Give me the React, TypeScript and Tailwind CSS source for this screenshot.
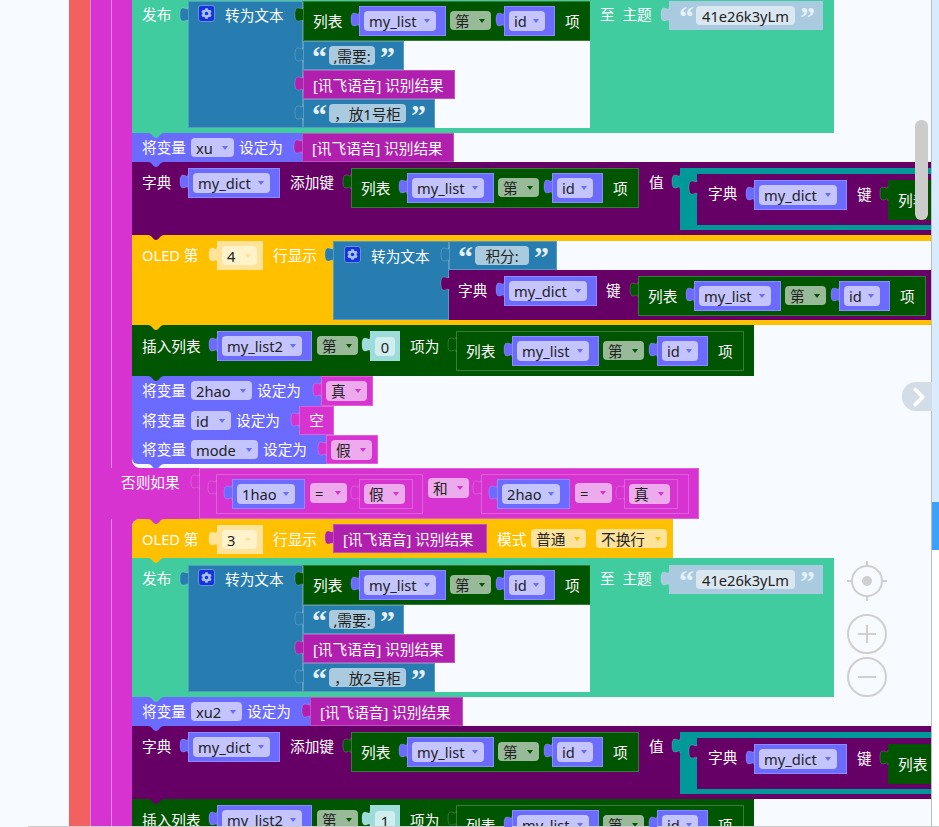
import type { ReactNode } from 'react';
import { ChevronRight } from 'lucide-react';
import { FaCog } from 'react-icons/fa';

const edge = 'shadow-[inset_0_0_0_1px_rgba(255,255,255,0.22)]';
const quote = "shrink-0 font-['Liberation_Serif',serif] text-[30px] leading-[26px] font-bold text-[#e6f0f7]";

function Tab({ fill, top = 'top-[6px]' }: { fill: string; top?: string }) {
  return (
    <svg viewBox="0 0 8 15" className={`absolute right-full h-[15px] w-[8px] z-10 overflow-visible stroke-white/30 stroke-[0.6] ${top} ${fill}`}>
      <path d="M8 0 C8 4 6 1 3 1 C0.5 1 0 4 0 7.5 C0 11 0.5 14 3 14 C6 14 8 11 8 15" />
    </svg>
  );
}

function Nub({ fill, left = 'left-[16px]' }: { fill: string; left?: string }) {
  return (
    <svg viewBox="0 0 16 5" className={`absolute top-full w-[16px] h-[5px] z-20 ${left} ${fill}`}>
      <path d="M0 0 C4 0 5 5 8 5 C11 5 12 0 16 0 z" />
    </svg>
  );
}

function T({ children, className = '' }: { children: ReactNode; className?: string }) {
  return <span className={`block shrink-0 whitespace-nowrap text-white leading-[20px] ${className}`}>{children}</span>;
}

function Pill({ text, className, caret }: { text: string; className: string; caret: string }) {
  return (
    <div className={`flex shrink-0 items-center justify-between rounded-[4px] pl-[5px] pr-[6px] text-[#222] whitespace-nowrap ${className}`}>
      <span className="leading-[20px]">{text}</span>
      <span className={`h-0 w-0 border-x-[3px] border-t-[4px] border-x-transparent ${caret}`} />
    </div>
  );
}

function Var({ name, className }: { name: string; className: string }) {
  return (
    <div className={`relative h-[30px] shrink-0 bg-[#6b6bff] pl-[5px] pt-[5px] ${edge} ${className}`}>
      <Tab fill="fill-[#6b6bff]" />
      <Pill text={name} className="h-[20px] w-[calc(100%-10px)] bg-[#c4c4ff]" caret="border-t-[#6b6bff]" />
    </div>
  );
}

function Di() {
  return <Pill text="第" className="ml-[4px] mt-[10px] h-[19px] w-[41px] bg-[#99ba99]" caret="border-t-[#005500]" />;
}

function ListItem({ className = '' }: { className?: string }) {
  return (
    <div className={`relative flex h-[40px] w-[288px] shrink-0 items-start bg-[#005500] ${edge} ${className}`}>
      <Tab fill="fill-[#005500]" />
      <T className="ml-[10px] mt-[10px] w-[30px]">列表</T>
      <Var name="my_list" className="ml-[16px] mt-[5px] w-[87px]" />
      <Di />
      <Var name="id" className="ml-[13px] mt-[5px] w-[51px]" />
      <T className="ml-[10px] mt-[10px] w-[15px]">项</T>
    </div>
  );
}

function Quote({ text, className, pill }: { text: string; className: string; pill: string }) {
  return (
    <div className={`relative flex h-[29px] shrink-0 items-start bg-[#277db0] ${edge} ${className}`}>
      <Tab fill="fill-[#277db0]" />
      <span className={`ml-[9px] mt-[3px] w-[17px] ${quote}`}>“</span>
      <span className={`mt-[5px] h-[19px] shrink-0 rounded-[4px] bg-[#a9cadf] text-center leading-[20px] whitespace-pre text-[#222] ${pill}`}>{text}</span>
      <span className={`ml-[5px] mt-[3px] w-[14px] ${quote}`}>”</span>
    </div>
  );
}

function Voice({ className = '' }: { className?: string }) {
  return (
    <div className={`relative h-[29px] shrink-0 bg-[#b01fae] pl-[10px] pt-[5px] ${edge} ${className}`}>
      <Tab fill="fill-[#b01fae]" />
      <T>[讯飞语音] 识别结果</T>
    </div>
  );
}

function Gear() {
  return (
    <div className="flex h-[17px] w-[17px] shrink-0 items-center justify-center rounded-[3px] border border-[#6f8fd8] bg-[#1234dd]">
      <FaCog size={11} className="text-[#a9bff0]" />
    </div>
  );
}

function Publish({ text, top }: { text: string; top: string }) {
  return (
    <div className="relative flex w-[702px]">
      <div className={`w-[56px] shrink-0 bg-[#40cc9e] ${top}`}>
        <T className="ml-[10px] mt-[3px] w-[30px]">发布</T>
      </div>
      <div className="w-[402px] shrink-0">
        <div className={`bg-[#40cc9e] ${top}`} />
        <div className="flex h-[127px]">
          <div className={`relative flex h-full w-[115px] shrink-0 items-start bg-[#277db0] ${edge}`}>
            <Tab fill="fill-[#277db0]" />
            <div className="ml-[10px] mt-[4px]"><Gear /></div>
            <T className="ml-[10px] mt-[4px]">转为文本</T>
          </div>
          <div className="flex w-[287px] shrink-0 flex-col">
            <ListItem className="w-[287px]" />
            <Quote text=",需要:" className="w-[101px]" pill="w-[46px]" />
            <Voice className="w-[152px]" />
            <Quote text={`，放${text}号柜`} className="w-[132px]" pill="w-[77px]" />
          </div>
        </div>
        <div className="h-[5px] bg-[#40cc9e]" />
      </div>
      <div className={`relative flex w-[244px] shrink-0 items-start bg-[#40cc9e] ${top}`}>
        <T className="ml-[10px] mt-[3px] w-[55px] [word-spacing:4px]">至 主题</T>
        <div className="relative ml-[14px] flex h-[29px] w-[154px] shrink-0 items-start bg-[#a9cadf]">
          <Tab fill="fill-[#a9cadf]" />
          <span className={`ml-[10px] mt-[3px] w-[17px] ${quote}`}>“</span>
          <span className="mt-[5px] h-[19px] w-[99px] shrink-0 rounded-[4px] bg-[#dbe7f0] text-center leading-[20px] text-[#222]">41e26k3yLm</span>
          <span className={`ml-[5px] mt-[3px] w-[14px] ${quote}`}>”</span>
        </div>
      </div>
      <Nub fill="fill-[#40cc9e]" />
    </div>
  );
}

function SetVar({ name, pill, body, h = 'h-[29px]', right, corner = '' }: { name: string; pill: string; body: string; h?: string; right: ReactNode; corner?: string }) {
  return (
    <div className={`relative flex ${h}`}>
      <div className={`flex shrink-0 items-start bg-[#6b6bff] ${body} ${corner}`}>
        <T className="ml-[10px] mt-[4px] w-[45px]">将变量</T>
        <Pill text={name} className={`ml-[4px] mt-[5px] h-[19px] bg-[#c4c4ff] ${pill}`} caret="border-t-[#6b6bff]" />
        <T className="ml-[5px] mt-[4px] w-[44px]">设定为</T>
      </div>
      {right}
      <Nub fill="fill-[#6b6bff]" />
    </div>
  );
}

function Bool({ text, className }: { text: string; className: string }) {
  return (
    <div className={`relative h-full shrink-0 bg-[#d633d0] pl-[5px] pt-[5px] ${edge} ${className}`}>
      <Tab fill="fill-[#d633d0]" />
      <Pill text={text} className="h-[20px] w-[41px] bg-[#edaaed]" caret="border-t-[#d633d0]" />
    </div>
  );
}

function DictAdd() {
  return (
    <div className="relative flex h-[73px] w-[799px] items-start bg-[#660066]">
      <T className="ml-[10px] mt-[10px] w-[30px]">字典</T>
      <Var name="my_dict" className="ml-[16px] mt-[6px] w-[92px]" />
      <T className="ml-[10px] mt-[10px] w-[45px]">添加键</T>
      <ListItem className="ml-[16px] mt-[6px] w-[287px]" />
      <T className="ml-[10px] mt-[10px] w-[15px]">值</T>
      <div className="relative ml-[16px] mt-[6px] h-[62px] w-[252px] shrink-0 bg-[#009999] pl-[17px] pt-[6px]">
        <Tab fill="fill-[#009999]" />
        <div className="relative flex h-[51px] w-[300px] items-start bg-[#660066]">
          <Tab fill="fill-[#660066]" />
          <T className="ml-[11px] mt-[9px] w-[30px]">字典</T>
          <Var name="my_dict" className="ml-[16px] mt-[6px] w-[93px]" />
          <T className="ml-[10px] mt-[10px] w-[15px]">键</T>
          <div className="relative ml-[16px] mt-[6px] h-[40px] w-[120px] shrink-0 bg-[#005500] pl-[10px] pt-[10px]">
            <Tab fill="fill-[#005500]" />
            <T>列表</T>
          </div>
        </div>
      </div>
      <Nub fill="fill-[#660066]" />
    </div>
  );
}

function OledHead({ num }: { num: string }) {
  return (
    <>
      <T className="ml-[10px] mt-[10px] w-[58px]">OLED 第</T>
      <div className="relative ml-[17px] mt-[6px] h-[29px] w-[46px] shrink-0 bg-[#ffe39a] pl-[5px] pt-[5px]">
        <Tab fill="fill-[#ffe39a]" />
        <Pill text={num} className="h-[19px] w-[35px] bg-[#fff3cc]" caret="border-t-[#ffe39a]" />
      </div>
      <T className="ml-[10px] mt-[10px] w-[45px]">行显示</T>
    </>
  );
}

function OledScore() {
  return (
    <div className="relative flex h-[90px] w-[799px]">
      <div className="flex w-[201px] shrink-0 items-start bg-[#ffc000]">
        <OledHead num="4" />
      </div>
      <div className="w-[598px] shrink-0">
        <div className="h-[6px] bg-[#ffc000]" />
        <div className="flex h-[79px]">
          <div className={`relative flex h-full w-[116px] shrink-0 items-start bg-[#277db0] ${edge}`}>
            <Tab fill="fill-[#277db0]" />
            <div className="ml-[11px] mt-[5px]"><Gear /></div>
            <T className="ml-[10px] mt-[5px]">转为文本</T>
          </div>
          <div className="flex w-[482px] shrink-0 flex-col">
            <Quote text="积分:" className="w-[108px]" pill="w-[54px]" />
            <div className="relative flex h-[50px] w-[482px] items-start bg-[#660066]">
              <Tab fill="fill-[#660066]" />
              <T className="ml-[9px] mt-[10px] w-[30px]">字典</T>
              <Var name="my_dict" className="ml-[16px] mt-[6px] w-[93px]" />
              <T className="ml-[9px] mt-[10px] w-[16px]">键</T>
              <ListItem className="ml-[16px] mt-[6px] w-[287px]" />
            </div>
          </div>
        </div>
        <div className="h-[5px] bg-[#ffc000]" />
      </div>
      <Nub fill="fill-[#ffc000]" />
    </div>
  );
}

function InsertRow({ num }: { num: string }) {
  return (
    <div className="relative flex h-[51px] w-[622px] items-start bg-[#005500]">
      <T className="ml-[10px] mt-[11px] w-[59px]">插入列表</T>
      <Var name="my_list2" className="ml-[16px] mt-[6px] w-[95px]" />
      <Pill text="第" className="ml-[5px] mt-[11px] h-[19px] w-[41px] bg-[#99ba99]" caret="border-t-[#005500]" />
      <div className="relative ml-[12px] mt-[6px] h-[30px] w-[30px] shrink-0 bg-[#9edbdb] pl-[5px] pt-[6px]">
        <Tab fill="fill-[#9edbdb]" />
        <div className="h-[19px] w-[20px] rounded-[4px] bg-[#d0eeee] text-center leading-[20px] text-[#222]">{num}</div>
      </div>
      <T className="ml-[10px] mt-[11px] w-[29px]">项为</T>
      <ListItem className="ml-[17px] mt-[6px]" />
      <Nub fill="fill-[#005500]" />
    </div>
  );
}

function Compare({ name, op, className }: { name: string; op: string; className: string }) {
  return (
    <div className={`relative mt-[6px] flex h-[40px] shrink-0 items-start ${edge} ${className}`}>
      <Tab fill="fill-[#d633d0]" />
      <Var name={name} className="ml-[16px] mt-[5px] w-[73px]" />
      <Pill text="=" className="ml-[5px] mt-[9px] h-[20px] w-[37px] bg-[#edaaed]" caret="border-t-[#d633d0]" />
      <div className="ml-[12px] mt-[5px] h-[30px]">
        <Bool text={op} className="w-[54px]" />
      </div>
    </div>
  );
}

function ElseIf() {
  return (
    <div className="bg-[#f7faff]">
      <div className="relative flex h-[51px] w-[588px] items-start bg-[#d633d0]">
        <T className="ml-[10px] mt-[4px] w-[59px]">否则如果</T>
        <div className={`relative ml-[19px] flex h-[51px] w-[500px] shrink-0 items-start ${edge}`}>
          <Tab fill="fill-[#d633d0]" />
          <Compare name="1hao" op="假" className="ml-[17px] w-[207px]" />
          <Pill text="和" className="ml-[5px] mt-[10px] h-[20px] w-[41px] bg-[#edaaed]" caret="border-t-[#d633d0]" />
          <Compare name="2hao" op="真" className="ml-[12px] w-[208px]" />
        </div>
        <Nub fill="fill-[#d633d0]" left="left-[37px]" />
      </div>
    </div>
  );
}

function OledVoice() {
  return (
    <div className="relative flex h-[39px] w-[541px] items-start rounded-tl-[8px] bg-[#ffc000]">
      <OledHead num="3" />
      <Voice className="ml-[15px] mt-[5px] w-[154px]" />
      <T className="ml-[10px] mt-[10px] w-[29px]">模式</T>
      <Pill text="普通" className="ml-[5px] mt-[10px] h-[19px] w-[55px] bg-[#ffe39a]" caret="border-t-[#ffc000]" />
      <Pill text="不换行" className="ml-[10px] mt-[10px] h-[19px] w-[71px] bg-[#ffe39a]" caret="border-t-[#ffc000]" />
      <Nub fill="fill-[#ffc000]" />
    </div>
  );
}

function ZoomControls() {
  return (
    <svg viewBox="0 0 44 142" className="absolute left-[845px] top-[558px] h-[142px] w-[44px] fill-none stroke-[#cfcfcf] stroke-[2]">
      <circle cx="22" cy="23" r="15" />
      <circle cx="22" cy="23" r="5" className="fill-[#cfcfcf] stroke-none" />
      <path d="M22 3 v5 M22 38 v5 M2 23 h5 M37 23 h5" />
      <circle cx="22" cy="76" r="19" />
      <path d="M22 67 v18 M13 76 h18" />
      <circle cx="22" cy="119" r="19" />
      <path d="M13 119 h18" />
    </svg>
  );
}

export default function App() {
  return (
    <div className="relative flex h-[827px] w-[939px] overflow-hidden bg-[#f7faff] text-[14.67px] [font-family:'Noto_Sans','Noto_Sans_CJK_SC',sans-serif]">
      <div className="w-[69px] shrink-0" />
      <div className="w-[21px] shrink-0 bg-[#f26060]" />
      <div className="w-[21px] shrink-0 bg-[#d633d0] shadow-[inset_1px_0_0_#e88ae5]" />
      <div className="flex w-[820px] shrink-0 flex-col overflow-hidden bg-[#d633d0] shadow-[inset_1px_0_0_#e88ae5]">
        <div className="ml-[21px] w-[799px] rounded-bl-[8px] bg-[#f7faff] pb-[4px]">
          <Publish text="1" top="pt-[1px]" />
          <SetVar name="xu" pill="w-[43px]" body="w-[170px]" right={<Voice className="w-[152px]" />} />
          <DictAdd />
          <OledScore />
          <InsertRow num="0" />
          <SetVar name="2hao" pill="w-[61px]" body="w-[189px]" h="h-[30px]" right={<Bool text="真" className="w-[52px]" />} />
          <SetVar name="id" pill="w-[40px]" body="w-[167px]" right={
            <div className={`relative h-full w-[35px] shrink-0 bg-[#d633d0] pt-[4px] text-center ${edge}`}>
              <Tab fill="fill-[#d633d0]" />
              <T>空</T>
            </div>
          } />
          <SetVar name="mode" pill="w-[67px]" body="w-[194px]" corner="rounded-bl-[6px]" right={<Bool text="假" className="w-[52px]" />} />
        </div>
        <ElseIf />
        <div className="ml-[21px] w-[799px] grow rounded-tl-[8px] bg-[#f7faff]">
          <OledVoice />
          <Publish text="2" top="pt-[7px]" />
          <SetVar name="xu2" pill="w-[51px]" body="w-[178px]" right={<Voice className="w-[153px]" />} />
          <DictAdd />
          <InsertRow num="1" />
        </div>
      </div>
      <div className="w-[1px] shrink-0 bg-[#bdbdbd]" />
      <div className="flex w-[7px] shrink-0 flex-col">
        <div className="h-[502px] bg-[#d9ecff]" />
        <div className="h-[48px] bg-[#3ca0ff]" />
        <div className="grow bg-white" />
      </div>
      <div className="absolute left-[915px] top-[120px] h-[100px] w-[13px] rounded-[6px] bg-[#cccccc]" />
      <div className="absolute left-[902px] top-[382px] flex h-[29px] w-[30px] items-center justify-center rounded-l-[14px] bg-[#d3dde8] pl-[3px]">
        <ChevronRight size={30} strokeWidth={3} className="shrink-0 text-white" />
      </div>
      <ZoomControls />
      <div className="absolute bottom-0 left-[28px] h-[1px] w-[911px] bg-[#cccccc]" />
    </div>
  );
}
